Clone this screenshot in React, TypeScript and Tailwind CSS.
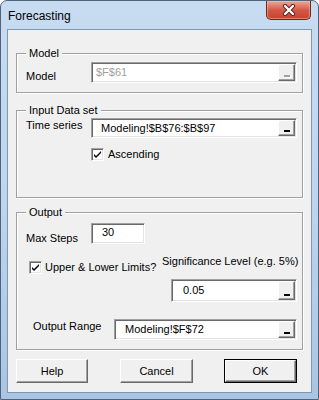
import React from "react";

function CloseBtn() {
  return (
    <div className="mr-[7px] w-[45px] h-[19px] rounded-b-[5px] border border-t-0 border-[#6a2a22] bg-linear-to-b from-[#e9a898] via-[#d35a45] to-[#c9432e] shadow-[inset_0_0_0_1px_rgba(255,200,190,0.45)] flex items-center justify-center">
      <svg width="14" height="12" viewBox="0 0 14 12">
        <path d="M3 2 L11 10 M11 2 L3 10" stroke="#5a2018" strokeWidth="4.2" strokeLinecap="round" />
        <path d="M3 2 L11 10 M11 2 L3 10" stroke="#ffffff" strokeWidth="2.4" strokeLinecap="round" />
      </svg>
    </div>
  );
}

function Group({ title, className, children }: { title: string; className: string; children: React.ReactNode }) {
  return (
    <div className={"border border-[#a0a0a0] shadow-[inset_1px_1px_0_#ffffff,1px_1px_0_#ffffff] " + className}>
      <div className="-mt-[8px] ml-[9px] w-fit px-[3px] bg-[#f0f0f0] leading-[14px]">{title}</div>
      {children}
    </div>
  );
}

function DotButton({ disabled }: { disabled?: boolean }) {
  return (
    <div className="w-[17px] h-full bg-[#f0f0f0] border border-t-white border-l-white border-r-[#696969] border-b-[#696969] shadow-[inset_-1px_-1px_0_#a0a0a0] flex items-end justify-center pb-[3px]">
      {disabled ? (
        <div className="w-[6px] h-[2px] bg-[#a0a0a0] shadow-[1px_1px_0_#ffffff]" />
      ) : (
        <div className="w-[6px] h-[2px] bg-black" />
      )}
    </div>
  );
}

function Field({ className, textClass, text, btn, disabled }: { className: string; textClass: string; text: string; btn?: boolean; disabled?: boolean }) {
  return (
    <div className={"flex p-[1px] bg-white border border-t-[#a0a0a0] border-l-[#a0a0a0] border-r-white border-b-white shadow-[inset_1px_1px_0_#696969,inset_-1px_-1px_0_#e3e3e3] " + className}>
      <div className={"flex-1 flex items-center leading-[13px] " + textClass + (disabled ? " text-[#a0a0a0]" : " text-black")}>{text}</div>
      {btn ? <DotButton disabled={disabled} /> : null}
    </div>
  );
}

function Check() {
  return (
    <div className="w-[13px] h-[13px] bg-white border border-t-[#a0a0a0] border-l-[#a0a0a0] border-r-white border-b-white shadow-[inset_1px_1px_0_#696969,inset_-1px_-1px_0_#e3e3e3] flex items-center justify-center">
      <svg width="9" height="9" viewBox="0 0 9 9">
        <path d="M1 4 L1 6 L3 8 L8 3 L8 1 L3 6 Z" fill="#000" />
      </svg>
    </div>
  );
}

function Btn({ label, className, def }: { label: string; className: string; def?: boolean }) {
  const inner = (
    <div className="flex-1 h-full flex items-center justify-center bg-[#f0f0f0] border border-t-white border-l-white border-r-[#696969] border-b-[#696969] shadow-[inset_-1px_-1px_0_#a0a0a0]">
      {label}
    </div>
  );
  if (def) {
    return <div className={"h-[24px] flex border border-black " + className}>{inner}</div>;
  }
  return <div className={"h-[24px] flex " + className}>{inner}</div>;
}

export default function App() {
  return (
    <div className="w-[319px] h-[400px] flex flex-col rounded-t-[7px] border border-[#4f637c] bg-linear-to-b from-[#c7dcf1] via-[#bed5ed] to-[#a9c5e3] font-['Liberation_Sans',Arial,sans-serif] text-[11px] text-black overflow-hidden">
      <div className="h-[28px] shrink-0 flex items-start justify-between">
        <span className="mt-[8px] ml-[7px] text-[12px] leading-[14px] text-black">Forecasting</span>
        <CloseBtn />
      </div>
      <div className="mx-[6px] h-[364px] shrink-0 border border-[#7f97b2] bg-[#f0f0f0] px-[8px] flex flex-col">
        <Group title="Model" className="mt-[23px] pb-[9px]">
          <div className="mt-[2px] flex items-start">
            <div className="w-[74px] pl-[9px] mt-[8px] leading-[13px]">Model</div>
            <Field className="w-[206px] h-[21px]" textClass="pl-[3px]" text="$F$61" btn disabled />
          </div>
        </Group>

        <Group title="Input Data set" className="mt-[17px] pb-[36px]">
          <div className="mt-[1px] flex items-start">
            <div className="w-[74px] pl-[9px] mt-[1px] leading-[13px]">Time series</div>
            <Field className="w-[206px] h-[20px]" textClass="pl-[8px]" text="Modeling!$B$76:$B$97" btn />
          </div>
          <div className="mt-[10px] ml-[74px] flex items-center">
            <Check />
            <span className="ml-[4px] leading-[13px]">Ascending</span>
          </div>
        </Group>

        <Group title="Output" className="mt-[14px] pb-[9px]">
          <div className="mt-[4px] flex items-start">
            <div className="w-[74px] pl-[9px] mt-[9px] leading-[13px]">Max Steps</div>
            <Field className="w-[54px] h-[21px]" textClass="pl-[9px] pb-[2px]" text="30" />
          </div>
          <div className="mt-[10px] flex items-start">
            <div className="w-[145px] pl-[12px] mt-[6px] flex items-center">
              <Check />
              <span className="ml-[3px] leading-[13px]">Upper &amp; Lower Limits?</span>
            </div>
            <div className="leading-[13px]">Significance Level (e.g. 5%)</div>
          </div>
          <div className="mt-[5px] ml-[154px]">
            <Field className="w-[126px] h-[23px]" textClass="pl-[10px]" text="0.05" btn />
          </div>
          <div className="mt-[17px] flex items-start">
            <div className="w-[97px] pl-[16px] mt-[1px] leading-[13px]">Output Range</div>
            <Field className="w-[183px] h-[21px]" textClass="pl-[9px]" text="Modeling!$F$72" btn />
          </div>
        </Group>

        <div className="mt-[9px] flex">
          <Btn label="Help" className="w-[72px]" />
          <Btn label="Cancel" className="w-[73px] ml-[32px]" />
          <Btn label="OK" className="w-[73px] ml-[31px]" def />
        </div>
      </div>
    </div>
  );
}
